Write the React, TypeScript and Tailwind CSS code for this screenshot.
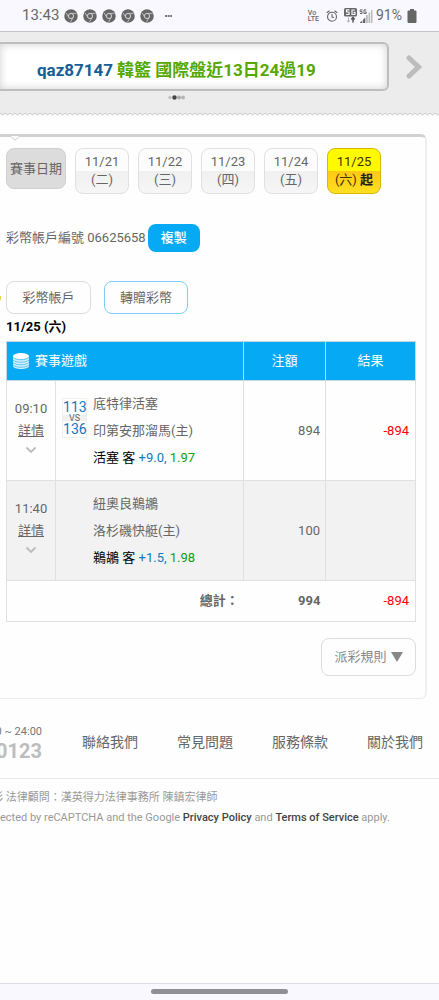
import { clsx } from 'clsx';

interface Bet {
  time: string;
  away: string;
  home: string;
  score?: [string, string];
  pick: string;
  spread: string;
  odds: string;
  stake: string;
  result: string;
}

const dates = [
  { day: '11/21', week: '(二)' },
  { day: '11/22', week: '(三)' },
  { day: '11/23', week: '(四)' },
  { day: '11/24', week: '(五)' },
  { day: '11/25', week: '(六)', active: true },
];

const bets: Bet[] = [
  {
    time: '09:10',
    away: '底特律活塞',
    home: '印第安那溜馬(主)',
    score: ['113', '136'],
    pick: '活塞 客',
    spread: '+9.0,',
    odds: '1.97',
    stake: '894',
    result: '-894',
  },
  {
    time: '11:40',
    away: '紐奧良鵜鶘',
    home: '洛杉磯快艇(主)',
    pick: '鵜鶘 客',
    spread: '+1.5,',
    odds: '1.98',
    stake: '100',
    result: '',
  },
];

const links = ['聯絡我們', '常見問題', '服務條款', '關於我們'];

function ChromeIcon() {
  return (
    <svg className="size-[14px]" viewBox="0 0 28 28" fill="none">
      <circle cx="14" cy="14" r="13.5" fill="#666" />
      <circle cx="14" cy="14" r="5.2" stroke="#dcdce2" strokeWidth="1.800" />
      <path d="M14 8.8h11M9.5 16.6 4.500 8M18.5 16.6 13 26" stroke="#c4c4ca" strokeWidth="1.800" />
    </svg>
  );
}

function StatusBar() {
  return (
    <div className="flex h-8 items-center border-b border-[#c4c4c8] bg-[#f8f8fe] px-[22px] text-[#686868]">
      <span className="text-[15px]">13:43</span>
      <div className="ml-[5px] flex gap-[5px]">
        {[0, 1, 2, 3, 4].map((i) => (
          <ChromeIcon key={i} />
        ))}
      </div>
      <svg className="ml-[11px] h-1 w-[7px]" viewBox="0 0 7 4">
        <path d="M0 1h2v2H0zM2.6 1h2v2h-2zM5.2 1h1.8v2H5.2z" fill="#777" />
      </svg>

      <div className="ml-auto flex items-center">
        <div className="mr-[7px] flex flex-col text-[7px] leading-[6px] font-medium">
          <span>Vo</span>
          <span>LTE</span>
        </div>
        <svg className="mr-[6px] size-3" viewBox="0 0 24 24" fill="none" stroke="#666" strokeWidth="2.2">
          <circle cx="12" cy="13.5" r="9" />
          <path d="M12 8v6l4 1M1.5 5.5 7 1.5M22.5 5.5 17 1.5" />
        </svg>
        <svg className="h-[15px] w-[14px]" viewBox="0 0 14 15">
          <rect width="13" height="8.5" rx="1.5" fill="#666" />
          <path d="M5.5 1.8H2.5v2.2h2.5v2.5H2M11 2H8v4.5h3V4.3H9.5" fill="none" stroke="#f8f8fe" strokeWidth="1.2" />
          <path d="M4.5 9.5v4.5M3 12.500l1.5 1.7L6 12.500" fill="none" stroke="#aaa" />
          <path d="M9 14.5V10M7.3 11.5 9 9.500l1.7 2" fill="none" stroke="#555" strokeWidth="1.5" />
        </svg>
        <svg className="ml-px h-[14px] w-[14px]" viewBox="0 0 14 14">
          <path d="M3.5.9H1.2v1.7h1.9v1.9H1M7.3.9H5v3.6h2.2V2.9H6.2" fill="none" stroke="#666" />
          <path d="M1 14h2.3v-2.5L1 13.5zM4 14h2.3V8.5L4 10.8z" fill="#666" />
          <path d="M7 14h1.8V6H7zM9.5 14h1.7V3.5H9.5zM12 14h1.5V1H12z" fill="#bbb" />
        </svg>
        <span className="ml-[3px] text-[14px]">91%</span>
        <svg className="ml-[5px] h-[14px] w-[10px]" viewBox="0 0 10 14">
          <path d="M3 0h4v1.5h1.5q1 0 1 1V13q0 1-1 1h-7q-1 0-1-1V2.5q0-1 1-1H3z" fill="#666" />
        </svg>
      </div>
    </div>
  );
}

function Banner() {
  return (
    <section className="bg-[#ececec] pt-[10px]">
      <div className="flex items-center">
        <a
          href="#"
          className="flex h-[49px] flex-1 items-center rounded-r-md border-y-2 border-r-2 border-[#bebebe] bg-white pt-2 pl-[37px] text-[17px] font-bold whitespace-nowrap text-[#54a800] shadow-[inset_0_0_8px_#d0d0d0]"
        >
          <span className="mr-1 text-[#135e96]">qaz87147</span> 韓籃 國際盤近13日24過19
        </a>
        <button type="button" aria-label="下一則" className="flex w-[50px] justify-center">
          <svg className="h-6 w-4" viewBox="0 0 16 24" fill="none">
            <path d="M3 3l9.5 9L3 21" stroke="#bcbcbc" strokeWidth="5" strokeLinecap="round" />
          </svg>
        </button>
      </div>
      <div className="mt-1 flex justify-center pr-[86px]">
        <svg className="h-[5px] w-[18px]" viewBox="0 0 18 5">
          <circle cx="2" cy="2.5" r="1.8" fill="#c4c4c4" />
          <circle cx="6.5" cy="2.5" r="2.2" fill="#444" />
          <circle cx="11" cy="2.5" r="1.9" fill="#aaa" />
          <circle cx="15" cy="2.5" r="1.9" fill="#b4b4b4" />
        </svg>
      </div>
      {/* torn paper edge */}
      <svg className="mt-3 block h-1 w-full">
        <defs>
          <pattern id="edge" width="5" height="4" patternUnits="userSpaceOnUse">
            <path d="M0 4V1l2.5 2L5 1v3z" fill="#fefefe" />
            <path d="M0 1l2.5 2L5 1" fill="none" stroke="#c8c8c8" />
          </pattern>
        </defs>
        <rect width="100%" height="4" fill="url(#edge)" />
      </svg>
    </section>
  );
}

function DateTabs() {
  return (
    <div className="flex gap-[9px]">
      <span className="flex h-[41px] w-[60px] items-center justify-center rounded-lg border border-[#d0d0d0] bg-[#dcdcdc] text-[13px] whitespace-nowrap">
        賽事日期
      </span>
      {dates.map((d) => (
        <button
          key={d.day}
          type="button"
          className={clsx(
            'h-[46px] w-[54px] rounded-lg border pb-px text-[13px] leading-[18px] whitespace-nowrap',
            d.active
              ? 'border-[#d8b800] bg-linear-to-b from-[#fffa00] from-50% via-[#ffc814] via-50% to-[#ffe020] text-[#3c3400]'
              : 'border-[#e0e0e0] bg-linear-to-b from-[#fcfcfc] from-50% via-[#f0f0f0] via-50% to-[#f6f6f6]'
          )}
        >
          {d.day}
          <br />
          {d.week}
          {d.active && <b className="text-[#222]"> 起</b>}
        </button>
      ))}
    </div>
  );
}

function BetRow({ bet, shaded }: { bet: Bet; shaded: boolean }) {
  return (
    <tr className={clsx('h-[100px]', shaded && 'bg-[#f2f2f2]')}>
      <td className="border border-[#e0e0e0] pb-[10px] text-center leading-[22px]">
        {bet.time}
        <br />
        <a href="#" className="underline">
          詳情
        </a>
        <svg className="mx-auto mt-1 h-2 w-3" viewBox="0 0 12 8" fill="none">
          <path d="M1.5 1.5 6 6l4.500-4.500" stroke="#bbb" strokeWidth="1.8" />
        </svg>
      </td>
      <td className="border border-[#e0e0e0] pl-[6px]">
        <div className="flex gap-[6px]">
          <div className="w-[25px] pt-2">
            {bet.score && (
              <div className="border border-[#f0f0f0] text-center text-[14px] leading-4 text-[#1478be]">
                {bet.score[0]}
                <div className="bg-[#f0f0f0] text-[9px] leading-[6px] text-[#666]">VS</div>
                {bet.score[1]}
              </div>
            )}
          </div>
          <div className="leading-[27px] whitespace-nowrap">
            <div>{bet.away}</div>
            <div>{bet.home}</div>
            <div className="text-black">
              {bet.pick} <span className="text-[#1478be]">{bet.spread}</span>{' '}
              <span className="text-[#0ca00c]">{bet.odds}</span>
            </div>
          </div>
        </div>
      </td>
      <td className="border border-[#e0e0e0] pr-[5px] text-right">{bet.stake}</td>
      <td className="border border-[#e0e0e0] pr-[6px] text-right text-[#f00]">{bet.result}</td>
    </tr>
  );
}

function BetTable() {
  return (
    <table className="mt-1 w-full table-fixed border-collapse border border-[#e0e0e0] text-[13px]">
      <colgroup>
        <col className="w-[12%]" />
        <col className="w-[46%]" />
        <col className="w-[20%]" />
        <col className="w-[22%]" />
      </colgroup>
      <thead>
        <tr className="h-[39px] bg-[#05a9f4] text-white">
          <th colSpan={2} className="border border-[#c4d8e2] pl-[6px] text-left font-normal">
            <span className="flex items-center gap-[6px]">
              <svg className="h-4 w-4" viewBox="0 0 16 16">
                <path d="M0 3v10c0 4 16 4 16 0V3z" fill="#d4effc" />
                <ellipse cx="8" cy="3" rx="8" ry="3" fill="#fff" />
                <path
                  d="M0 4.5c3 3 13 3 16 0M0 7c3 3 13 3 16 0M0 9.5c3 3 13 3 16 0M0 12c3 3 13 3 16 0"
                  fill="none"
                  stroke="#3bbcf6"
                  strokeWidth=".8"
                />
              </svg>
              賽事遊戲
            </span>
          </th>
          <th className="border border-[#c4d8e2] font-normal">注額</th>
          <th className="border border-[#c4d8e2] font-normal">結果</th>
        </tr>
      </thead>
      <tbody>
        {bets.map((bet, i) => (
          <BetRow key={bet.time} bet={bet} shaded={i % 2 === 1} />
        ))}
        <tr className="h-[41px]">
          <td colSpan={2} className="pr-[5px] text-right font-bold">
            總計：
          </td>
          <td className="pr-[5px] text-right font-bold">994</td>
          <td className="pr-[6px] text-right text-[#f00]">-894</td>
        </tr>
      </tbody>
    </table>
  );
}

function Footer() {
  return (
    <footer>
      <div className="flex h-20 items-center justify-between border-b border-[#e8e8e8] pt-2 pr-4">
        <div className="flex w-[42px] flex-col items-end whitespace-nowrap">
          <span className="text-[11px] leading-4 text-[#777]">0 ~ 24:00</span>
          <span className="text-[20px] leading-[22px] font-bold text-[#bdbdbd]">0123</span>
        </div>
        <nav className="flex gap-[39px] text-[14px] text-[#666]">
          {links.map((label) => (
            <a key={label} href="#">
              {label}
            </a>
          ))}
        </nav>
      </div>
      <div className="pt-[9px] text-[11px] leading-5 whitespace-nowrap text-[#999]">
        <p className="-ml-2">彩 法律顧問：漢英得力法律事務所 陳鎮宏律師</p>
        <p>
          ected by reCAPTCHA and the Google{' '}
          <a href="#" className="font-medium text-[#444]">
            Privacy Policy
          </a>{' '}
          and{' '}
          <a href="#" className="font-medium text-[#444]">
            Terms of Service
          </a>{' '}
          apply.
        </p>
      </div>
    </footer>
  );
}

export default function App() {
  return (
    <div className="flex min-h-screen flex-col overflow-hidden bg-[#fefefe] font-[Roboto,'Noto_Sans_CJK_TC',sans-serif] text-[#666]">
      <StatusBar />
      <Banner />

      <main className="relative mt-[18px] mr-3 rounded-r-md border-t-3 border-r-2 border-b border-t-[#d2d2d2] border-r-[#efefef] border-b-[#ececec] pt-[11px] pr-[9px] pb-[22px] pl-[6px]">
        <svg className="absolute -top-px left-[10px] h-[5px] w-[10px]" viewBox="0 0 10 5">
          <path d="M0 0 5 4l5-4" fill="#fff" stroke="#ccc" />
        </svg>
        <DateTabs />

        <div className="mt-[30px] flex items-center gap-[2px] text-[13px]">
          彩幣帳戶編號 06625658
          <button type="button" className="h-7 w-[52px] rounded-lg bg-[#05a9f4] font-medium text-white">
            複製
          </button>
        </div>

        <div className="relative mt-[29px] flex gap-[13px] text-[13px]">
          <span className="absolute top-[14px] -left-[11px] size-[6px] rounded-full bg-[#e8cc20]" />
          <button type="button" className="h-[33px] w-[85px] rounded-lg border border-[#ddd]">
            彩幣帳戶
          </button>
          <button type="button" className="h-[33px] w-[84px] rounded-lg border border-[#80cdf5]">
            轉贈彩幣
          </button>
        </div>

        <h2 className="mt-[3px] text-[13px] leading-5 font-bold text-black">11/25 (六)</h2>
        <BetTable />

        <button
          type="button"
          className="mt-4 ml-auto flex h-[38px] w-[95px] items-center justify-center gap-1 rounded-lg border border-[#ddd] text-[13px] text-[#888]"
        >
          派彩規則
          <svg className="h-[10px] w-3" viewBox="0 0 12 10">
            <path d="M0 0h12L6 10z" fill="#888" />
          </svg>
        </button>
      </main>

      <Footer />

      <div className="mt-auto flex h-[17px] justify-center border-t border-[#dcdce6] bg-[#f8f8fe] pt-[5px]">
        <div className="h-[5px] w-[137px] rounded-full bg-[#909094]" />
      </div>
    </div>
  );
}
